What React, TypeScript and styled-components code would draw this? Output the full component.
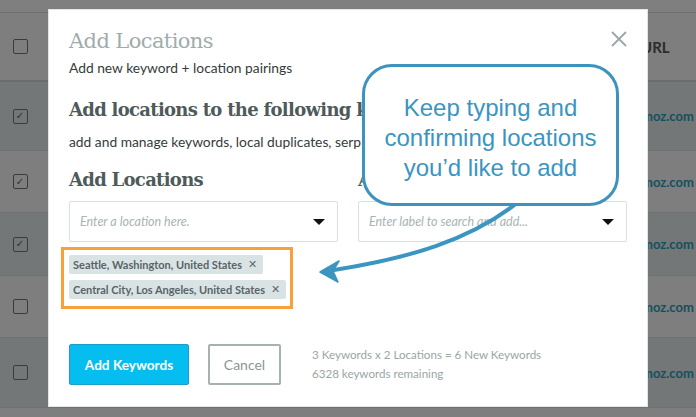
import React from "react";
import styled, { createGlobalStyle } from "styled-components";

const Global = createGlobalStyle`
  html, body { margin: 0; padding: 0; }
  body { background: #7f7f7f; font-family: Lato, "Open Sans", sans-serif; }
  * { box-sizing: border-box; }
`;

const Page = styled.div`
  position: relative;
  width: 696px;
  height: 417px;
  overflow: hidden;
  background: #7f7f7f;
`;

const Table = styled.div`
  display: flex;
  flex-direction: column;
  padding-top: 12px;
`;

const Row = styled.div<{ $h: number; $dark?: boolean; $thick?: boolean }>`
  display: grid;
  grid-template-columns: 40px 601px 1fr;
  align-items: center;
  height: ${(p) => p.$h}px;
  background: ${(p) => (p.$dark ? "#737777" : "#7e7e7e")};
  border-top: ${(p) => (p.$thick ? "2px solid #6a6d6d" : "1px solid #6e7171")};
`;

const Check = styled.div`
  justify-self: center;
  width: 15px;
  height: 15px;
  border: 1.5px solid #383c3c;
  border-radius: 2px;
  display: flex;
  align-items: center;
  justify-content: center;
  color: #2c3030;
  font-size: 10px;
  line-height: 1;
  font-family: "DejaVu Sans", sans-serif;
`;

const HeadCell = styled.div`
  grid-column: 3;
  font: 700 15px Lato, sans-serif;
  color: #2a2c2c;
`;

const UrlCell = styled.div`
  grid-column: 3;
  font: 700 13px Lato, sans-serif;
  color: #14505f;
  white-space: nowrap;
  margin-left: 1px;
`;

const Modal = styled.div`
  position: absolute;
  left: 48px;
  top: 9px;
  width: 600px;
  height: 398px;
  background: #fff;
  border: 1px solid #dfe6e6;
  padding: 17px 21px 0 20px;
  display: flex;
  flex-direction: column;
`;

const Close = styled.button`
  position: absolute;
  right: 20px;
  top: 21px;
  width: 16px;
  height: 16px;
  padding: 0;
  border: 0;
  background: none;
  display: flex;
`;

const Title = styled.h1`
  margin: 0;
  font: 300 21px/28px "DejaVu Serif", serif;
  color: #a0acac;
  letter-spacing: -0.6px;
`;

const Sub = styled.p<{ $mt: number }>`
  margin: ${(p) => p.$mt}px 0 0;
  font: 400 13.8px/18px Lato, sans-serif;
  color: #343b3b;
  white-space: nowrap;
`;

const Heading = styled.h2<{ $mt: number }>`
  margin: ${(p) => p.$mt}px 0 0;
  font: 700 18px/26px "DejaVu Serif", serif;
  color: #4f5a5a;
  letter-spacing: -0.7px;
  white-space: nowrap;
`;

const Columns = styled.div`
  display: grid;
  grid-template-columns: 269px 269px;
  column-gap: 20px;
  margin-top: 16px;
`;

const Col = styled.div`
  display: flex;
  flex-direction: column;
`;

const Select = styled.div`
  margin-top: 8px;
  height: 41px;
  border: 1px solid #d7e1e1;
  border-radius: 2px;
  display: flex;
  align-items: center;
  justify-content: space-between;
  padding: 0 10px 0 10px;
`;

const Placeholder = styled.span`
  font: italic 400 12.5px Lato, sans-serif;
  color: #a9b4b4;
`;

const Caret = styled.span`
  width: 0;
  height: 0;
  border-left: 6px solid transparent;
  border-right: 6px solid transparent;
  border-top: 6px solid #111;
  margin-right: 2px;
`;

const TagBox = styled.div`
  margin: 5px 0 0 -8px;
  width: 232px;
  height: 62px;
  border: 3px solid #f8a13c;
  padding: 5px 0 0 5px;
  display: flex;
  flex-direction: column;
  align-items: flex-start;
  gap: 6px;
`;

const Tag = styled.span`
  display: inline-flex;
  align-items: center;
  gap: 6px;
  height: 19px;
  padding: 0 6px 0 4px;
  background: #d9e3e3;
  border-radius: 2px;
  font: 700 11px Lato, sans-serif;
  color: #58636a;
  white-space: nowrap;
`;

const TagX = styled.span`
  font: 700 11px "DejaVu Sans", sans-serif;
  color: #5f6a6a;
`;

const Footer = styled.div`
  margin-top: 35px;
  display: flex;
  align-items: center;
`;

const Primary = styled.button`
  width: 120px;
  height: 41px;
  background: #06bdef;
  border: 1px solid #1a9fc9;
  border-radius: 2px;
  color: #fff;
  font: 700 13.6px Lato, sans-serif;
  padding: 0;
`;

const Secondary = styled.button`
  margin-left: 19px;
  width: 73px;
  height: 41px;
  background: #fff;
  border: 2px solid #a7b1b1;
  border-radius: 2px;
  color: #8b9696;
  font: 400 14px Lato, sans-serif;
  padding: 0;
`;

const Stats = styled.div`
  margin-left: 31px;
  margin-top: -1px;
  font: 400 11.6px/19px Lato, sans-serif;
  color: #9aa5a5;
`;

const Bubble = styled.div`
  position: absolute;
  left: 362px;
  top: 64px;
  width: 257px;
  height: 142px;
  padding-top: 5px;
  background: #fff;
  border: 3px solid #3c93bd;
  border-radius: 30px;
  display: flex;
  align-items: center;
  justify-content: center;
  text-align: center;
  font: 400 24px/30px "Liberation Sans", Arial, sans-serif;
  color: #3b95c1;
`;

const Arrow = styled.svg`
  position: absolute;
  left: 0;
  top: 0;
  pointer-events: none;
`;

const rows = [
  { h: 70, dark: true, on: true },
  { h: 62, dark: false, on: true },
  { h: 63, dark: true, on: true },
  { h: 62, dark: false, on: false },
  { h: 70, dark: true, on: false },
];

export default function App() {
  return (
    <>
      <Global />
      <Page>
        <Table>
          <Row $h={68}>
            <Check />
            <HeadCell>URL</HeadCell>
          </Row>
          {rows.map((r, i) => (
            <Row key={i} $h={r.h} $dark={r.dark} $thick={i === 0}>
              <Check>{r.on ? "✓" : ""}</Check>
              <UrlCell>moz.com</UrlCell>
            </Row>
          ))}
          <Row $h={10} />
        </Table>

        <Modal>
          <Close aria-label="Close">
            <svg width="16" height="16" viewBox="0 0 16 16">
              <path d="M1 1 L15 15 M15 1 L1 15" stroke="#9ca6a6" strokeWidth="1.8" />
            </svg>
          </Close>
          <Title>Add Locations</Title>
          <Sub $mt={4}>Add new keyword + location pairings</Sub>
          <Heading $mt={20}>Add locations to the following keywords</Heading>
          <Sub $mt={10}>add and manage keywords, local duplicates, serp features and more</Sub>
          <Columns>
            <Col>
              <Heading $mt={0}>Add Locations</Heading>
              <Select>
                <Placeholder>Enter a location here.</Placeholder>
                <Caret />
              </Select>
              <TagBox>
                <Tag>
                  Seattle, Washington, United States <TagX>✕</TagX>
                </Tag>
                <Tag>
                  Central City, Los Angeles, United States <TagX>✕</TagX>
                </Tag>
              </TagBox>
            </Col>
            <Col>
              <Heading $mt={0}>Add Labels</Heading>
              <Select>
                <Placeholder>Enter label to search and add...</Placeholder>
                <Caret />
              </Select>
            </Col>
          </Columns>
          <Footer>
            <Primary>Add Keywords</Primary>
            <Secondary>Cancel</Secondary>
            <Stats>
              3 Keywords x 2 Locations = 6 New Keywords
              <br />
              6328 keywords remaining
            </Stats>
          </Footer>
        </Modal>

        <Arrow width="696" height="417" viewBox="0 0 696 417">
          <path d="M517 203 C 470 240 410 258 334 270" fill="none" stroke="#3a95c0" strokeWidth="4" strokeLinecap="round" />
          <path d="M320 272 L339 261 L333 271 L338 282 Z" fill="#3a95c0" stroke="#3a95c0" strokeWidth="1.5" strokeLinejoin="round" />
        </Arrow>

        <Bubble>
          Keep typing and
          <br />
          confirming locations
          <br />
          you’d like to add
        </Bubble>
      </Page>
    </>
  );
}
